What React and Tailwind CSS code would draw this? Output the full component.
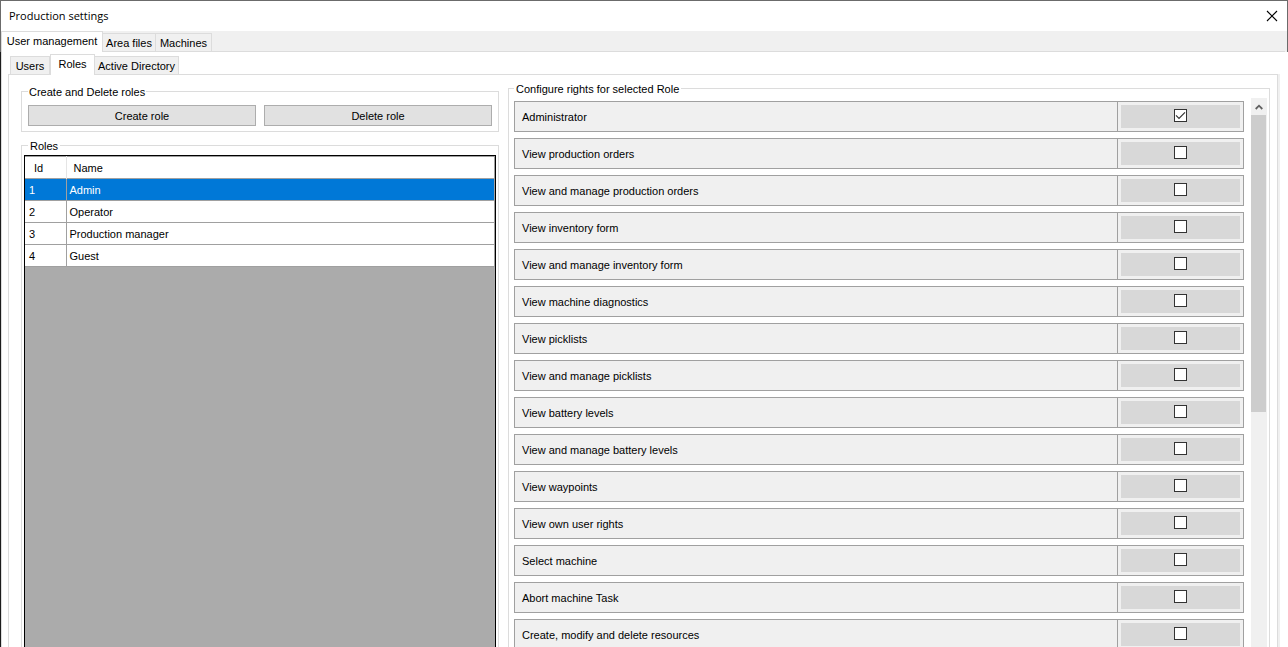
import { useState } from "react";

const roles = ["Admin", "Operator", "Production manager", "Guest"];

const rights = [
  "Administrator",
  "View production orders",
  "View and manage production orders",
  "View inventory form",
  "View and manage inventory form",
  "View machine diagnostics",
  "View picklists",
  "View and manage picklists",
  "View battery levels",
  "View and manage battery levels",
  "View waypoints",
  "View own user rights",
  "Select machine",
  "Abort machine Task",
  "Create, modify and delete resources",
];

function TabStrip({ tabs, active, onSelect, label }) {
  return (
    <div role="tablist" aria-label={label} className="flex items-end">
      {tabs.map((tab) => (
        <button
          key={tab.name}
          role="tab"
          aria-selected={tab.name === active}
          onClick={() => onSelect(tab.name)}
          className={
            (tab.name === active
              ? "relative z-10 -mb-px h-[21px] border-x border-t bg-white pb-[2px] "
              : "h-[18px] border-t border-r bg-[#f0f0f0] ") +
            "whitespace-nowrap border-[#dcdcdc] text-center leading-4 " +
            tab.width
          }
        >
          {tab.name}
        </button>
      ))}
    </div>
  );
}

function RightRow({ name, index, checked, onToggle }) {
  const id = "right-" + index;
  return (
    <li className="flex h-[31px] shrink-0 border border-[#a0a0a0] bg-[#f0f0f0]">
      <label htmlFor={id} className="flex-1 truncate pt-px pl-[7px] leading-[29px]">
        {name}
      </label>
      <div className="w-[126px] border-l border-[#a0a0a0] py-[3px] pr-[3px] pl-[3px]">
        <div className="flex h-[23px] w-[119px] justify-center bg-[#d8d8d8] pt-1">
          <span className="relative h-[13px] w-[13px]">
            <input
              id={id}
              type="checkbox"
              checked={checked}
              onChange={onToggle}
              className="peer block h-[13px] w-[13px] appearance-none border border-[#333333] bg-white"
            />
            <svg
              viewBox="0 0 13 13"
              className="pointer-events-none absolute inset-0 hidden h-[13px] w-[13px] peer-checked:block"
              fill="none"
              stroke="#333333"
              strokeWidth="1.2"
            >
              <path d="M2 6.3 L5 9.3 L11 3.3" />
            </svg>
          </span>
        </div>
      </div>
    </li>
  );
}

export default function App() {
  const [mainTab, setMainTab] = useState("User management");
  const [subTab, setSubTab] = useState("Roles");
  const [selected, setSelected] = useState(0);
  const [granted, setGranted] = useState({ 0: true });

  return (
    <div className="flex h-screen flex-col overflow-hidden border-t border-[#6b6b6b] bg-white font-['Liberation_Sans',Arial,sans-serif] text-[11px] text-black">
      <header className="flex h-[30px] shrink-0 items-center justify-between border-x border-[#6b6b6b] pr-[9px] pl-2">
        <h1 className="font-['Open_Sans','Noto_Sans',sans-serif] text-[11px]">Production settings</h1>
        <button aria-label="Close" className="h-3 w-3">
          <svg viewBox="0 0 12 12" className="h-3 w-3" stroke="#000000" strokeWidth="1.1">
            <path d="M1 1 L11 11 M11 1 L1 11" />
          </svg>
        </button>
      </header>

      <nav className="h-[21px] shrink-0 border-x border-[#6b6b6b] bg-[#f0f0f0] pr-[2px]">
        <div className="flex h-[21px] items-end border-b border-[#dcdcdc]">
          <TabStrip
            label="Sections"
            active={mainTab}
            onSelect={setMainTab}
            tabs={[
              { name: "User management", width: "w-[102px]" },
              { name: "Area files", width: "w-[53px]" },
              { name: "Machines", width: "w-[56px]" },
            ]}
          />
        </div>
      </nav>

      <div className="flex min-h-0 flex-1 border-l border-[#1c1c1c]">
        <main className="flex min-h-0 flex-1 flex-col border-l border-[#dcdcdc] pr-2 pl-[6px]">
          <div className="flex h-[22px] shrink-0 items-end pl-[2px]">
            <div className="h-[18px] w-px bg-[#dcdcdc]" />
            <TabStrip
              label="User management"
              active={subTab}
              onSelect={setSubTab}
              tabs={[
                { name: "Users", width: "w-[39px]" },
                { name: "Roles", width: "w-[45px]" },
                { name: "Active Directory", width: "w-[84px]" },
              ]}
            />
          </div>

          <div className="min-h-0 flex-1 border-r-2 border-[#f0f0f0]">
            <div className="flex h-full gap-[9px] border-x border-t border-[#dcdcdc] pr-[7px] pl-3">
              <div className="flex w-[478px] shrink-0 flex-col gap-[7px] pt-[10px]">
                <fieldset className="min-w-0 border border-[#dcdcdc] px-[6px] pb-[5px]">
                  <legend className="px-px pt-px leading-3">Create and Delete roles</legend>
                  <div className="flex gap-2 pt-[7px]">
                    <button className="h-[21px] flex-1 border border-[#adadad] bg-[#e1e1e1] pt-px leading-[18px]">
                      Create role
                    </button>
                    <button className="h-[21px] flex-1 border border-[#adadad] bg-[#e1e1e1] pt-px leading-[18px]">
                      Delete role
                    </button>
                  </div>
                </fieldset>

                <fieldset className="flex min-h-0 min-w-0 flex-1 flex-col border-x border-t border-[#dcdcdc] px-[2px]">
                  <legend className="ml-1 px-[2px] pt-px leading-3">Roles</legend>
                  <div className="mt-[3px] min-h-0 flex-1 border-x border-t border-black bg-[#ababab]">
                    <table className="w-full table-fixed border-collapse border-t border-r border-[#a0a0a0] bg-white text-left">
                      <thead>
                        <tr className="h-[22px] border-b border-[#a0a0a0]">
                          <th className="w-[41px] border-r border-[#e5e5e5] pt-[2px] pl-[9px] font-normal">Id</th>
                          <th className="pt-[2px] pl-[7px] font-normal">Name</th>
                        </tr>
                      </thead>
                      <tbody>
                        {roles.map((role, i) => (
                          <tr
                            key={role}
                            onClick={() => setSelected(i)}
                            className={
                              "h-[22px] border-b border-[#a0a0a0] " +
                              (i === selected ? "bg-[#0078d7] text-white" : "")
                            }
                          >
                            <td className="border-r border-[#a0a0a0] pt-[2px] pl-1">{i + 1}</td>
                            <td className="pt-[2px] pl-[3px]">{role}</td>
                          </tr>
                        ))}
                      </tbody>
                    </table>
                  </div>
                </fieldset>
              </div>

              <fieldset className="mt-[7px] min-h-0 min-w-0 flex-1 border-x border-t border-[#dcdcdc] pr-[2px] pl-[5px]">
                <legend className="px-[2px] pt-px leading-3">Configure rights for selected Role</legend>
                <div className="flex h-full gap-[7px]">
                  <ul className="flex min-w-0 flex-1 flex-col gap-[6px] overflow-hidden pt-[6px]">
                    {rights.map((name, i) => (
                      <RightRow
                        key={name}
                        name={name}
                        index={i}
                        checked={Boolean(granted[i])}
                        onToggle={() => setGranted({ ...granted, [i]: !granted[i] })}
                      />
                    ))}
                  </ul>
                  <div className="mt-[3px] w-4 shrink-0 bg-[#f0f0f0]">
                    <button aria-label="Scroll up" className="flex h-[17px] w-[15px] items-center justify-center">
                      <svg viewBox="0 0 8 6" className="h-[6px] w-2" fill="none" stroke="#606060" strokeWidth="1.8">
                        <path d="M0.7 5 L4 1.7 L7.3 5" />
                      </svg>
                    </button>
                    <div className="h-[297px] w-[15px] bg-[#cdcdcd]" />
                  </div>
                </div>
              </fieldset>
            </div>
          </div>
        </main>
      </div>
    </div>
  );
}
